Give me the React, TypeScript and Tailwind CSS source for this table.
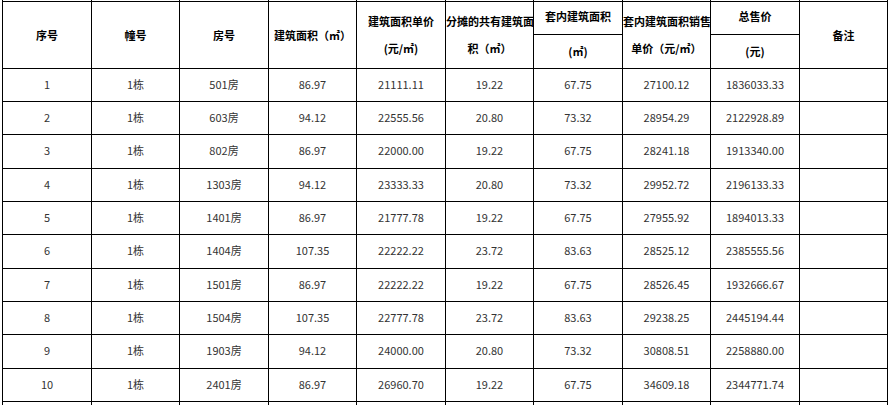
import React from "react";

const rows: string[][] = [
  ["1", "1栋", "501房", "86.97", "21111.11", "19.22", "67.75", "27100.12", "1836033.33"],
  ["2", "1栋", "603房", "94.12", "22555.56", "20.80", "73.32", "28954.29", "2122928.89"],
  ["3", "1栋", "802房", "86.97", "22000.00", "19.22", "67.75", "28241.18", "1913340.00"],
  ["4", "1栋", "1303房", "94.12", "23333.33", "20.80", "73.32", "29952.72", "2196133.33"],
  ["5", "1栋", "1401房", "86.97", "21777.78", "19.22", "67.75", "27955.92", "1894013.33"],
  ["6", "1栋", "1404房", "107.35", "22222.22", "23.72", "83.63", "28525.12", "2385555.56"],
  ["7", "1栋", "1501房", "86.97", "22222.22", "19.22", "67.75", "28526.45", "1932666.67"],
  ["8", "1栋", "1504房", "107.35", "22777.78", "23.72", "83.63", "29238.25", "2445194.44"],
  ["9", "1栋", "1903房", "94.12", "24000.00", "20.80", "73.32", "30808.51", "2258880.00"],
  ["10", "1栋", "2401房", "86.97", "26960.70", "19.22", "67.75", "34609.18", "2344771.74"],
];

const widths = [89, 88, 89, 88, 89, 88, 89, 88, 89, 88];

export default function App() {
  const th = "border border-black p-0 text-center align-middle font-bold text-black whitespace-nowrap";
  const td = "border border-black p-0 text-center align-middle text-[#333] whitespace-nowrap";
  return (
    <div
      className="h-[405px] w-[890px] overflow-hidden bg-white text-[11px]"
      style={{ fontFamily: '"Noto Sans CJK SC", "Noto Sans", sans-serif' }}
    >
      <table className="ml-[2px] mt-[-32.33px] table-fixed border-collapse w-[885px]">
        <colgroup>
          {widths.map((w, i) => (
            <col key={i} style={{ width: w }} />
          ))}
        </colgroup>
        <tbody>
          <tr className="h-[33.33px]">
            {widths.map((_, i) => (
              <td key={i} className={td}></td>
            ))}
          </tr>
          <tr className="h-[33.33px]">
            <th rowSpan={2} className={th}>序号</th>
            <th rowSpan={2} className={th}>幢号</th>
            <th rowSpan={2} className={th}>房号</th>
            <th rowSpan={2} className={th}>建筑面积（㎡）</th>
            <th rowSpan={2} className={`${th} leading-[27px]`}>
              建筑面积单价
              <br />
              (元/㎡)
            </th>
            <th rowSpan={2} className={`${th} leading-[27px]`}>
              分摊的共有建筑面
              <br />
              积（㎡）
            </th>
            <th className={`${th} pb-[4px]`}>套内建筑面积</th>
            <th rowSpan={2} className={`${th} leading-[27px]`}>
              套内建筑面积销售
              <br />
              单价（元/㎡）
            </th>
            <th className={`${th} pb-[4px]`}>总售价</th>
            <th rowSpan={2} className={th}>备注</th>
          </tr>
          <tr className="h-[33.33px]">
            <th className={th}>(㎡)</th>
            <th className={th}>(元)</th>
          </tr>
          {rows.map((r, i) => (
            <tr key={i} className="h-[33.33px]">
              {r.map((c, j) => (
                <td key={j} className={`${td} pb-[2px]`}>
                  {c}
                </td>
              ))}
              <td className={td}></td>
            </tr>
          ))}
          <tr className="h-[33.33px]">
            {widths.map((_, i) => (
              <td key={i} className={td}></td>
            ))}
          </tr>
        </tbody>
      </table>
    </div>
  );
}
